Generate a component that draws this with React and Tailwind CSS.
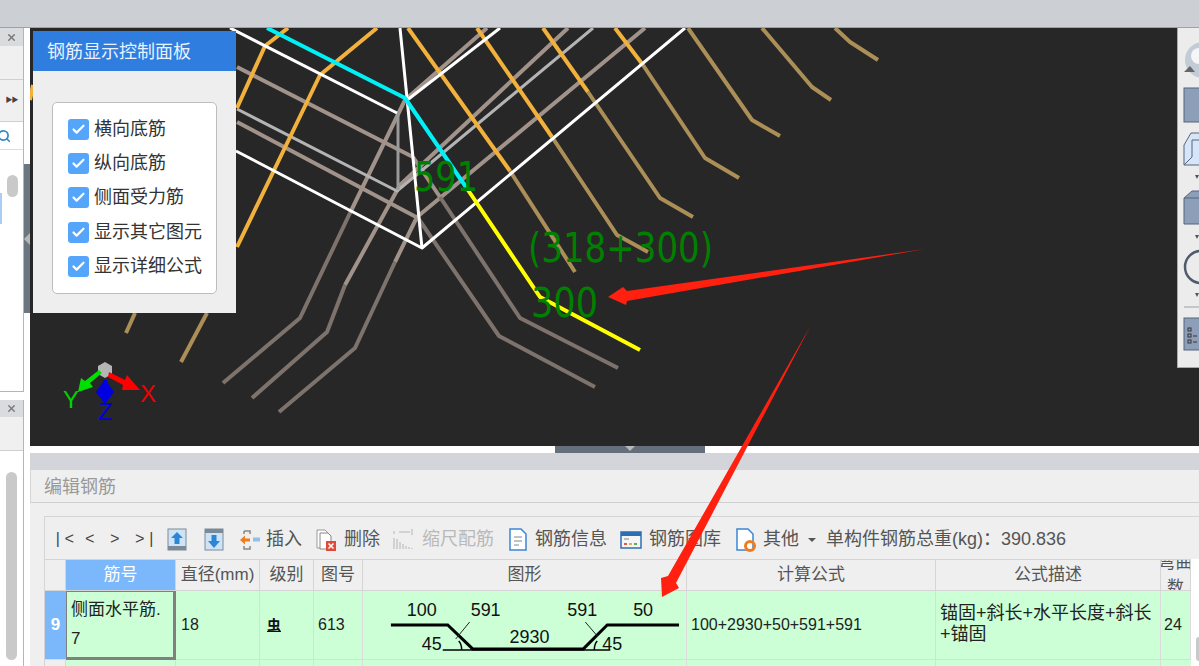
import React from "react";
import { Check, X, Search } from "lucide-react";

const orange = "#f2b13c";
const tan = "#ab8f57";
const taupe = "#a1938a";
const taupeDark = "#7d736c";

const checks = ["横向底筋", "纵向底筋", "侧面受力筋", "显示其它图元", "显示详细公式"];

function Line({ points, color, width = 4 }) {
  return <polyline points={points} fill="none" stroke={color} strokeWidth={width} strokeLinejoin="round" />;
}

function Scene() {
  return (
    <svg className="block w-[1148px] h-[418px]" viewBox="30 28 1148 418">
      <Line points="30,100 33,85" color={orange} />
      {/* taupe rebars */}
      <Line points="237,67 413,157" color={taupe} />
      <Line points="237,122 418,218" color={taupe} />
      <Line points="487,28 405,100 350,213" color={taupe} />
      <Line points="350,213 300,318 223,383" color={taupeDark} />
      <Line points="568,28 400,185 345,285" color={taupe} />
      <Line points="345,285 327,332 252,398" color={taupeDark} />
      <Line points="645,28 417,217 395,262" color={taupe} />
      <Line points="395,262 355,348 279,412" color={taupeDark} />
      <Line points="413,157 440,197" color={taupe} />
      <Line points="440,197 520,318 618,368" color={taupeDark} />
      <Line points="418,218 499,336 595,387" color={taupeDark} />
      {/* grey thin */}
      <Line points="237,109 397,191 593,28" color="#b4b4b4" width={3} />
      <Line points="398,113 398,190" color="#9a9a9a" width={3} />
      {/* orange rebars, fading past the box */}
      <Line points="377,28 320,75 237,247" color={orange} />
      <Line points="207,313 181,362" color={tan} />
      <Line points="288,28 265,46 237,108" color={orange} />
      <Line points="135,313 126,333" color={tan} />
      <Line points="408,28 510,171" color={orange} />
      <Line points="510,171 575,272" color={tan} />
      <Line points="477,28 552,137" color={orange} />
      <Line points="552,137 617,235 648,252" color={tan} />
      <Line points="543,28 588,92" color={orange} />
      <Line points="588,92 660,198 693,217" color={tan} />
      <Line points="615,28 643,65" color={orange} />
      <Line points="643,65 705,158 739,178" color={tan} />
      <Line points="688,28 752,120 780,136" color={tan} />
      <Line points="762,28 812,87 831,100" color={tan} />
      <Line points="835,28 850,42 878,60" color={tan} />
      {/* white box */}
      <Line points="230,28 397,113" color="#fff" width={3} />
      <Line points="400,28 422,248" color="#fff" width={3} />
      <Line points="236,151 422,248 685,28" color="#fff" width={3} />
      <Line points="406,101 500,28" color="#fff" width={3} />
      {/* picked bar */}
      <Line points="267,28 405,98 468,190" color="#00f0f5" />
      <Line points="468,190 540,297 640,350" color="#ffff00" />
      <g fontFamily="DejaVu Sans, sans-serif" fontSize="41" fill="#008000">
        <text x="414" y="191" textLength="64" lengthAdjust="spacingAndGlyphs">591</text>
        <text x="528" y="262" textLength="185" lengthAdjust="spacingAndGlyphs">(318+300)</text>
        <text x="531" y="317" textLength="67" lengthAdjust="spacingAndGlyphs">300</text>
      </g>
      {/* axis gizmo */}
      <polygon points="105,362 112,366 112,374 105,378 98,374 98,366" fill="#b5b5b5" />
      <polygon points="102,373 90,383 93,387 78,392 81,378 85,381 99,370" fill="#00e000" />
      <polygon points="109,372 125,380 127,375 140,390 122,390 123,385 108,377" fill="#ff0000" />
      <polygon points="103,380 107,380 107,382 114,392 105,404 96,392 103,382" fill="#0000e0" />
      <text x="63" y="408" fontFamily="Liberation Sans, sans-serif" fontSize="24" fill="#00d000">Y</text>
      <text x="140" y="402" fontFamily="Liberation Sans, sans-serif" fontSize="24" fill="#f00000">X</text>
      <text x="98" y="420" fontFamily="Liberation Sans, sans-serif" fontSize="24" fill="#0000e0">Z</text>
    </svg>
  );
}

function ControlPanel() {
  return (
    <div className="absolute left-[3px] top-[3px] w-[203px] h-[282px] bg-[#eeeeee]">
      <div className="h-[40px] bg-[#2e7ddf] pl-[14px] leading-[42px] text-[18px] text-[#e8f2ff]">钢筋显示控制面板</div>
      <div className="mt-[31px] ml-[19px] w-[165px] h-[192px] bg-white border border-[#bdbdbd] rounded-[5px] pl-[15px] pt-[9px]">
        {checks.map((c) => (
          <div key={c} className="h-[34.4px] flex items-center gap-[5px] text-[18px] text-[#333333]">
            <span className="w-[21px] h-[21px] rounded-[3px] bg-[#55a5fb] flex items-center justify-center">
              <Check size={15} color="white" strokeWidth={3.5} />
            </span>
            {c}
          </div>
        ))}
      </div>
    </div>
  );
}

function RightTools() {
  return (
    <div className="absolute right-0 top-0 w-[22px] h-[340px] bg-[#ececec] border-l border-b border-[#a8a8a8] overflow-hidden">
      <svg className="block" width="21" height="340" viewBox="1178 28 21 340">
        <circle cx="1203" cy="60" r="18" fill="#c3cbd6" />
        <circle cx="1199" cy="56" r="8" fill="#f5f6f8" />
        <polygon points="1184,72 1190,66 1195,72" fill="#666" />
        <rect x="1184" y="88" width="20" height="34" fill="#8d9eb8" stroke="#56657a" />
        <polygon points="1184,145 1191,133 1205,133 1205,165 1184,165" fill="#d6e6f8" stroke="#56657a" />
        <polyline points="1205,140 1192,140 1192,157 1184,165" fill="none" stroke="#56657a" />
        <polygon points="1184,198 1192,191 1205,191 1205,224 1184,224" fill="#8d9eb8" stroke="#56657a" />
        <line x1="1184" y1="198" x2="1205" y2="198" stroke="#56657a" />
        <polygon points="1195,175 1199,175 1197,179" fill="#555" />
        <polygon points="1195,235 1199,235 1197,239" fill="#555" />
        <circle cx="1201" cy="267" r="16" fill="none" stroke="#4f5c6c" strokeWidth="2.5" />
        <polygon points="1195,293 1199,293 1197,297" fill="#555" />
        <line x1="1184" y1="307" x2="1199" y2="307" stroke="#a0a0a0" />
        <rect x="1184" y="318" width="20" height="32" fill="#8d9eb8" stroke="#56657a" />
        <rect x="1188" y="328" width="3" height="3" fill="none" stroke="#333" />
        <rect x="1188" y="334" width="3" height="3" fill="none" stroke="#333" />
        <rect x="1188" y="340" width="3" height="3" fill="none" stroke="#333" />
        <line x1="1193" y1="336" x2="1197" y2="336" stroke="#333" />
        <line x1="1193" y1="342" x2="1197" y2="342" stroke="#333" />
      </svg>
    </div>
  );
}

function Sidebar() {
  return (
    <div className="w-[30px] shrink-0 flex bg-white">
      <div className="w-[24px] flex flex-col">
        <div className="h-[364px] border-r border-b border-[#b5b5b5] flex flex-col bg-white">
          <div className="h-[18px] bg-[#d9dbdf] flex items-center justify-center">
            <X size={11} color="#777" strokeWidth={3} />
          </div>
          <div className="h-[34px] bg-[#f0f0f0] border-b border-[#cfcfcf]" />
          <div className="h-[42px] bg-[#f0f0f0] border-b border-[#cfcfcf] flex items-center justify-center text-[7px] text-[#444] tracking-[-1px]">▶▶</div>
          <div className="h-[28px] border-b border-[#dddddd] overflow-hidden flex items-center">
            <Search size={14} color="#2f8fc9" strokeWidth={3} className="shrink-0 -ml-[3px]" />
          </div>
          <div className="flex-1 flex">
            <div className="w-[2px] h-[31px] mt-[43px] bg-[#a9cdf3]" />
            <div className="ml-[5px] mt-[25px] w-[11px] h-[22px] rounded-full bg-[#c9c9c9]" />
          </div>
        </div>
        <div className="h-[8px]" />
        <div className="flex-1 border-r border-[#b5b5b5] flex flex-col bg-white">
          <div className="h-[17px] bg-[#d9dbdf] flex items-center justify-center">
            <X size={11} color="#777" strokeWidth={3} />
          </div>
          <div className="h-[34px] bg-[#f0f0f0] border-b border-[#cfcfcf]" />
          <div className="ml-[6px] mt-[21px] w-[11px] h-[188px] rounded-full bg-[#c9c9c9]" />
        </div>
      </div>
      <div className="w-[6px]">
        <div className="mt-[136px] h-[149px] bg-[#6c7680] flex items-center justify-center">
          <span className="w-0 h-0 border-y-[6px] border-y-transparent border-r-[6px] border-r-[#b8b8b8]" />
        </div>
      </div>
    </div>
  );
}

function ToolIcon({ children }) {
  return (
    <svg className="shrink-0" width="22" height="24" viewBox="0 0 22 24">
      {children}
    </svg>
  );
}

function Toolbar() {
  return (
    <div className="h-[42px] flex items-center pl-[8px] pt-[3px] text-[18px] text-[#555555] whitespace-nowrap">
      <span className="w-[32px] font-['Liberation_Mono',monospace] text-[16px] tracking-[2px] text-[#444]">|&lt;</span>
      <span className="w-[25px] font-['Liberation_Mono',monospace] text-[16px] text-[#444]">&lt;</span>
      <span className="w-[25px] font-['Liberation_Mono',monospace] text-[16px] text-[#444]">&gt;</span>
      <span className="w-[31px] font-['Liberation_Mono',monospace] text-[16px] tracking-[2px] text-[#444]">&gt;|</span>
      <ToolIcon>
        <rect x="2" y="1" width="18" height="21" fill="#cfe3f7" stroke="#7b8a99" />
        <rect x="2" y="18" width="18" height="4" fill="#7b8a99" />
        <path d="M11 4 L17 10 H13.5 V16 H8.500 V10 H5 Z" fill="#2c86d8" />
      </ToolIcon>
      <span className="w-[15px]" />
      <ToolIcon>
        <rect x="2" y="1" width="18" height="21" fill="#cfe3f7" stroke="#7b8a99" />
        <rect x="2" y="1" width="18" height="4" fill="#7b8a99" />
        <path d="M11 20 L17 13 H13.5 V7 H8.500 V13 H5 Z" fill="#2c86d8" />
      </ToolIcon>
      <span className="w-[14px]" />
      <ToolIcon>
        <path d="M5 3 H11 V6 M5 3 V6 M5 18 V21 H11 V18" fill="none" stroke="#888" strokeWidth="1.500" />
        <path d="M1 12 L6 7.500 V10.500 H11 V13.500 H6 V16.500 Z" fill="#f07c1e" />
        <rect x="14" y="9.500" width="7" height="4" fill="#8fc0ea" />
      </ToolIcon>
      <span className="ml-[5px] w-[49px]">插入</span>
      <ToolIcon>
        <path d="M2 2 H10 L13 5 V20 H2 Z" fill="#fff" stroke="#999" />
        <path d="M5 5 H13 L16 8 V21 H5 Z" fill="#fff" stroke="#888" />
        <rect x="11" y="13" width="10" height="10" fill="#e04a3a" />
        <path d="M13.500 15.500 L18.500 20.500 M18.500 15.500 L13.500 20.500" stroke="#fff" strokeWidth="1.500" />
      </ToolIcon>
      <span className="ml-[7px] w-[49px]">删除</span>
      <ToolIcon>
        <path d="M1 3 V6 M1 10 V21 M4 11 V21 M7 14 V21 M10 16 V21 M13 18 V21 M16 19 V21 M19 20 V21 M6 4 H17 M19 1 V7" fill="none" stroke="#b5b5b5" />
      </ToolIcon>
      <span className="ml-[7px] w-[85px] text-[#b9b9b9]">缩尺配筋</span>
      <ToolIcon>
        <path d="M3 1 H14 L19 6 V22 H3 Z" fill="#fff" stroke="#3c87d6" strokeWidth="1.500" />
        <path d="M7 9 H15 M7 13 H15 M7 17 H12" stroke="#7a8794" />
      </ToolIcon>
      <span className="ml-[6px] w-[85px]">钢筋信息</span>
      <ToolIcon>
        <rect x="1" y="4" width="20" height="16" fill="#f5f5f5" stroke="#2c6fb5" strokeWidth="1.500" />
        <rect x="1" y="4" width="20" height="4" fill="#2c6fb5" />
        <rect x="4" y="15" width="3" height="2" fill="#e05a4a" />
        <rect x="9" y="15" width="3" height="2" fill="#e0b04a" />
        <rect x="14" y="15" width="3" height="2" fill="#5ab04a" />
        <path d="M4 11 H9" stroke="#888" />
      </ToolIcon>
      <span className="ml-[7px] w-[86px]">钢筋图库</span>
      <ToolIcon>
        <path d="M2 1 H13 L18 6 V22 H2 Z" fill="#fff" stroke="#3c87d6" strokeWidth="1.500" />
        <circle cx="15" cy="18" r="4.500" fill="none" stroke="#f07c1e" strokeWidth="3" />
      </ToolIcon>
      <span className="ml-[6px] w-[45px]">其他</span>
      <span className="w-0 h-0 border-x-[4px] border-x-transparent border-t-[4px] border-t-[#555]" />
      <span className="ml-[10px]">单构件钢筋总重(kg)：390.836</span>
    </div>
  );
}

function ShapeDrawing() {
  const num = { fontFamily: "Liberation Sans, sans-serif", fontSize: 19, fill: "#111", lengthAdjust: "spacingAndGlyphs" };
  return (
    <svg className="block" width="324" height="68" viewBox="362 590 324 68">
      <polyline points="390,624 447,624 472,648 583,648 607,624 679,624" fill="none" stroke="#000" strokeWidth="3" />
      <line x1="442" y1="649" x2="610" y2="649" stroke="#000" strokeWidth="1.500" />
      <line x1="469" y1="621" x2="455" y2="638" stroke="#222" />
      <line x1="585" y1="621" x2="597" y2="635" stroke="#222" />
      <path d="M461 649 Q461 643 458 640 M594 649 Q594 643 597 640" fill="none" stroke="#000" strokeWidth="1.500" />
      <text x="406" y="615" textLength="30" {...num}>100</text>
      <text x="470" y="615" textLength="30" {...num}>591</text>
      <text x="567" y="615" textLength="30" {...num}>591</text>
      <text x="633" y="615" textLength="20" {...num}>50</text>
      <text x="421" y="649" textLength="20" {...num}>45</text>
      <text x="509" y="642" textLength="40" {...num}>2930</text>
      <text x="602" y="649" textLength="20" {...num}>45</text>
    </svg>
  );
}

function Table() {
  const head = "bg-[#efefef] border-r border-b border-[#d5d5d5] flex items-center justify-center text-[17px] text-[#555555] overflow-hidden";
  const cell = "bg-[#ccffd6] border-r border-b border-[#dcdcdc] flex items-center overflow-hidden";
  const num = "text-[16px] text-[#222]";
  return (
    <div className="flex">
      <div className="w-[1146px] grid grid-cols-[21px_110px_84px_54px_49px_324px_249px_225px_30px] grid-rows-[31px_69px_20px] border-t border-[#d5d5d5]">
        <div className={head} />
        <div className="bg-[#7ab8fb] border-r border-b border-[#d5d5d5] flex items-center justify-center text-[17px] text-white">筋号</div>
        <div className={head}>直径(mm)</div>
        <div className={head}>级别</div>
        <div className={head}>图号</div>
        <div className={head}>图形</div>
        <div className={head}>计算公式</div>
        <div className={head}>公式描述</div>
        <div className={`${head} text-[14px] leading-[25px] text-center`}>
          <span className="shrink-0">弯曲<br />数</span>
        </div>

        <div className="bg-[#7ab8fb] border-b border-[#dcdcdc] flex items-center justify-center font-bold text-[17px] text-white">9</div>
        <div className="bg-[#ccffd6] border-r-[3px] border-b-[3px] border-t border-l border-[#808080] pl-[4px] pt-[3px] text-[17px] leading-[29px] text-[#222]">
          侧面水平筋.<br />7
        </div>
        <div className={`${cell} pl-[5px] ${num}`}>18</div>
        <div className={`${cell} pl-[7px] text-[14px] font-bold text-[#111] underline`}>虫</div>
        <div className={`${cell} pl-[4px] ${num}`}>613</div>
        <div className={cell}><ShapeDrawing /></div>
        <div className={`${cell} pl-[4px] ${num}`}>100+2930+50+591+591</div>
        <div className={`${cell} pl-[4px] pb-[3px] text-[18px] leading-[21px] text-[#222]`}>
          <span>锚固+斜长+水平长度+斜长<br />+锚固</span>
        </div>
        <div className={`${cell} pl-[3px] ${num}`}>24</div>

        <div className="bg-[#efefef] border-r border-[#d5d5d5]" />
        <div className="bg-[#ccffd6] border-r border-[#dcdcdc]" />
        <div className="bg-[#ccffd6] border-r border-[#dcdcdc]" />
        <div className="bg-[#ccffd6] border-r border-[#dcdcdc]" />
        <div className="bg-[#ccffd6] border-r border-[#dcdcdc]" />
        <div className="bg-[#ccffd6] border-r border-[#dcdcdc]" />
        <div className="bg-[#ccffd6] border-r border-[#dcdcdc]" />
        <div className="bg-[#ccffd6] border-r border-[#dcdcdc]" />
        <div className="bg-[#ccffd6]" />
      </div>
      <div className="flex-1 bg-white flex justify-end">
        <div className="mt-[78px] w-[3px] h-[24px] rounded-l bg-[#c9c9c9]" />
      </div>
    </div>
  );
}

function EditPanel() {
  return (
    <div className="flex-1 bg-[#efefef] overflow-hidden">
      <div className="h-[17px] bg-[#d3d5da]" />
      <div className="h-[33px] pl-[13px] border-b border-[#cfcfcf] border-l border-l-[#d5d5d5] text-[18px] leading-[35px] text-[#999999]">编辑钢筋</div>
      <div className="ml-[14px] mt-[13px] border-t border-l border-[#d5d5d5]">
        <Toolbar />
        <Table />
      </div>
    </div>
  );
}

export default function App() {
  return (
    <div className="relative w-[1199px] h-[666px] overflow-hidden bg-white font-['Liberation_Sans','Noto_Sans_CJK_SC',sans-serif]">
      <div className="h-[28px] bg-[#ccd0d5] border-b border-[#9ea2a8]" />
      <div className="flex h-[638px]">
        <Sidebar />
        <div className="flex-1 flex flex-col min-w-0">
          <div className="relative h-[418px] bg-[#272727]">
            <Scene />
            <ControlPanel />
            <RightTools />
          </div>
          <div className="h-[7px] bg-white pl-[525px]">
            <div className="w-[150px] h-[7px] bg-[#646f7b] flex justify-center">
              <span className="w-0 h-0 border-x-[5px] border-x-transparent border-t-[5px] border-t-[#b8b8b8]" />
            </div>
          </div>
          <EditPanel />
        </div>
      </div>
      {/* red annotation arrows drawn on top of the screenshot */}
      <svg className="absolute inset-0 pointer-events-none" width="1199" height="666" viewBox="0 0 1199 666">
        <polygon points="925,249 627,291 623,287 608,297 626,305 627,301" fill="#ff2010" />
        <polygon points="811,325 668,576 661,578 662,597 679,588 676,583" fill="#ff2010" />
      </svg>
    </div>
  );
}
